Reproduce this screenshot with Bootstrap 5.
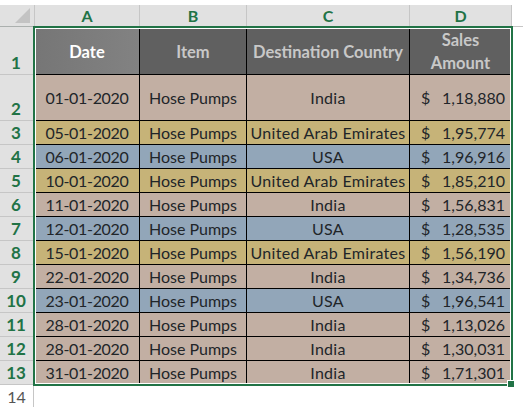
<!DOCTYPE html>
<html lang="en"><head><meta charset="utf-8"><title>Sales</title>
<link rel="stylesheet" href="https://cdn.jsdelivr.net/npm/bootstrap@5.3.0/dist/css/bootstrap.min.css">
<style>
html,body{background:#fff;margin:0;overflow:hidden}
.sheet{position:relative;width:523px;height:407px;padding-top:5px;font-family:Lato,"Liberation Sans",sans-serif;font-size:16px;color:#000}
.sheet::after{content:"";position:absolute;left:513px;top:26px;width:10px;height:1px;background:#c6c6c6}
.xl{table-layout:fixed;border-collapse:separate;border-spacing:0;width:512px;margin:0}
.xl th,.xl td{padding:0;text-align:center;vertical-align:middle;line-height:18px;white-space:nowrap;overflow:hidden}
.hc th{height:22px;background:#e1e1e1;color:#217346;font-size:16px;font-weight:700;border-right:1px solid #c6c6c6;border-bottom:1px solid #abb0ae}
.corner{position:relative}
.corner::after{content:"";position:absolute;right:4px;bottom:3px;border-style:solid;border-width:0 0 15px 15px;border-color:transparent transparent #c3c3c3 transparent}
.xl tbody th{background:#e1e1e1;color:#217346;font-size:17px;font-weight:700;vertical-align:bottom;padding:0 2px 2px 0;border-right:1px solid #abb0ae;border-bottom:1px solid #c6c6c6}
.xl tbody td{border-right:1px solid #000;border-bottom:1px solid #000;font-size:16px}
.xl tbody td.wide{letter-spacing:.3px}
.xl tbody td.datecell{letter-spacing:-.3px}
.hrow td,.hrow th{height:48px}
.xl .hrow td{background:#606060;color:#c8c8c8;font-weight:700;font-size:16.5px;padding-top:2px}
.xl .hrow td.first{background:linear-gradient(90deg,#767676,#828282);color:#fff}
.hrow td span{display:block;line-height:23px}
.hrow td span:last-child{margin-bottom:-1px}
.tall td,.tall th{height:46px}
.r24 td,.r24 th{height:24px}
.ind td{background:#c2afa3}
.uae td{background:#c6b378}
.usa td{background:#92a6b9}
.amt{display:flex;justify-content:space-between;padding:0 6px 0 11px}
.xl tbody .last th{color:#555;font-weight:400;border:0;height:24px;background:linear-gradient(90deg,#fff 33px,#c6c6c6 33px,#c6c6c6 34px,#fff 34px);vertical-align:middle;padding:0 2px 0 0;font-size:16px}
.pick{position:absolute;left:33px;top:26px;width:480px;height:360px;border:2px solid #217346;pointer-events:none}
.pick::before{content:"";position:absolute;inset:0;border:1px solid #fff}
.pick::after{content:"";position:absolute;right:-4px;bottom:-4px;width:6px;height:6px;background:#217346;border:1px solid #fff;box-sizing:content-box}
</style></head><body>
<div class="sheet">
<table class="table xl">
<colgroup><col style="width:35px"><col style="width:105px"><col style="width:107px"><col style="width:163px"><col style="width:102px"></colgroup>
<thead><tr class="hc"><th class="corner"></th><th>A</th><th>B</th><th>C</th><th>D</th></tr></thead>
<tbody>
<tr class="hrow"><th>1</th><td class="first">Date</td><td>Item</td><td>Destination Country</td><td><span>Sales</span><span>Amount</span></td></tr>
<tr class="tall ind"><th>2</th><td class="datecell">01-01-2020</td><td>Hose Pumps</td><td class="wide">India</td><td><div class="amt"><span>$</span><span>1,18,880</span></div></td></tr>
<tr class="r24 uae"><th>3</th><td class="datecell">05-01-2020</td><td>Hose Pumps</td><td class="wide">United Arab Emirates</td><td><div class="amt"><span>$</span><span>1,95,774</span></div></td></tr>
<tr class="r24 usa"><th>4</th><td class="datecell">06-01-2020</td><td>Hose Pumps</td><td class="wide">USA</td><td><div class="amt"><span>$</span><span>1,96,916</span></div></td></tr>
<tr class="r24 uae"><th>5</th><td class="datecell">10-01-2020</td><td>Hose Pumps</td><td class="wide">United Arab Emirates</td><td><div class="amt"><span>$</span><span>1,85,210</span></div></td></tr>
<tr class="r24 ind"><th>6</th><td class="datecell">11-01-2020</td><td>Hose Pumps</td><td class="wide">India</td><td><div class="amt"><span>$</span><span>1,56,831</span></div></td></tr>
<tr class="r24 usa"><th>7</th><td class="datecell">12-01-2020</td><td>Hose Pumps</td><td class="wide">USA</td><td><div class="amt"><span>$</span><span>1,28,535</span></div></td></tr>
<tr class="r24 uae"><th>8</th><td class="datecell">15-01-2020</td><td>Hose Pumps</td><td class="wide">United Arab Emirates</td><td><div class="amt"><span>$</span><span>1,56,190</span></div></td></tr>
<tr class="r24 ind"><th>9</th><td class="datecell">22-01-2020</td><td>Hose Pumps</td><td class="wide">India</td><td><div class="amt"><span>$</span><span>1,34,736</span></div></td></tr>
<tr class="r24 usa"><th>10</th><td class="datecell">23-01-2020</td><td>Hose Pumps</td><td class="wide">USA</td><td><div class="amt"><span>$</span><span>1,96,541</span></div></td></tr>
<tr class="r24 ind"><th>11</th><td class="datecell">28-01-2020</td><td>Hose Pumps</td><td class="wide">India</td><td><div class="amt"><span>$</span><span>1,13,026</span></div></td></tr>
<tr class="r24 ind"><th>12</th><td class="datecell">28-01-2020</td><td>Hose Pumps</td><td class="wide">India</td><td><div class="amt"><span>$</span><span>1,30,031</span></div></td></tr>
<tr class="r24 ind"><th>13</th><td class="datecell">31-01-2020</td><td>Hose Pumps</td><td class="wide">India</td><td><div class="amt"><span>$</span><span>1,71,301</span></div></td></tr>
<tr class="last"><th>14</th></tr>
</tbody></table>
<div class="pick"></div>
</div>
</body></html>
